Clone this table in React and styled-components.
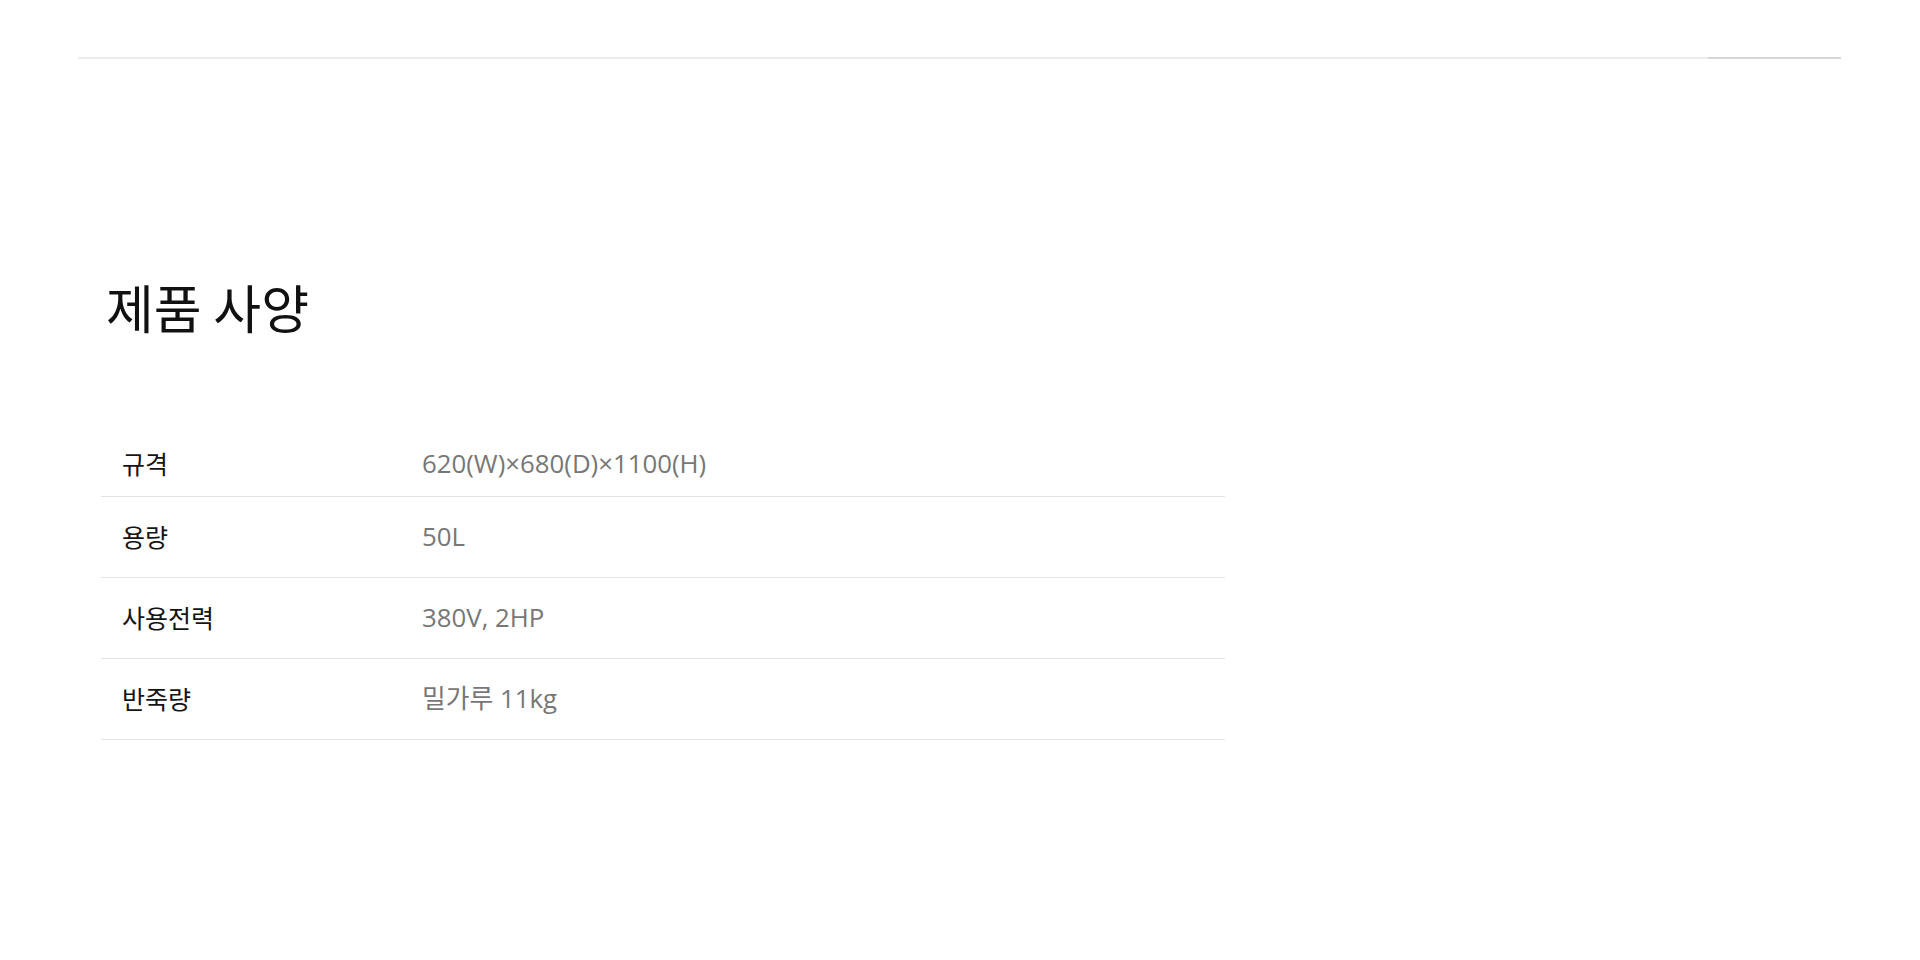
import styled, { createGlobalStyle } from "styled-components";

const GlobalStyle = createGlobalStyle`
  html, body {
    margin: 0;
    padding: 0;
    background: #ffffff;
  }
  body {
    font-family: "Open Sans", "Noto Sans CJK KR", sans-serif;
  }
`;

const Page = styled.div`
  min-height: 960px;
  padding: 57px 79px 0 78px;
  box-sizing: border-box;
`;

const TopBar = styled.div`
  display: flex;
  height: 2px;
  background: #ececec;
`;

const TopBarActive = styled.div`
  margin-left: auto;
  width: 133px;
  background: #d6d6d6;
`;

const Section = styled.section`
  width: 1124px;
  margin-left: 23px;
  padding-top: 217px;
`;

const Title = styled.h2`
  margin: 0 0 0 5px;
  font-family: "Noto Sans CJK KR", sans-serif;
  font-size: 52px;
  font-weight: 400;
  line-height: 62px;
  color: #111111;
`;

const SpecTable = styled.div`
  margin-top: 107px;
`;

const Row = styled.div`
  display: grid;
  grid-template-columns: 321px 1fr;
  align-items: center;
  padding: ${(p) => (p.$first ? "0 0 15px" : "21px 0 23px")};
  border-bottom: 1px solid #e3e3e3;
  line-height: 36px;
`;

const Label = styled.div`
  padding-left: 21px;
  font-family: "Noto Sans CJK KR", sans-serif;
  font-size: 25px;
  color: #141414;
`;

const Value = styled.div`
  font-family: "Open Sans", "Noto Sans CJK KR", sans-serif;
  font-size: 25.8px;
  color: #777777;
`;

const specs = [
  { label: "규격", value: "620(W)×680(D)×1100(H)" },
  { label: "용량", value: "50L" },
  { label: "사용전력", value: "380V, 2HP" },
  { label: "반죽량", value: "밀가루 11kg" },
];

function App() {
  return (
    <>
      <GlobalStyle />
      <Page>
        <TopBar>
          <TopBarActive />
        </TopBar>

        <Section>
          <Title>제품 사양</Title>

          <SpecTable>
            {specs.map((s, i) => (
              <Row key={s.label} $first={i === 0}>
                <Label>{s.label}</Label>
                <Value>{s.value}</Value>
              </Row>
            ))}
          </SpecTable>
        </Section>
      </Page>
    </>
  );
}

export default App;
